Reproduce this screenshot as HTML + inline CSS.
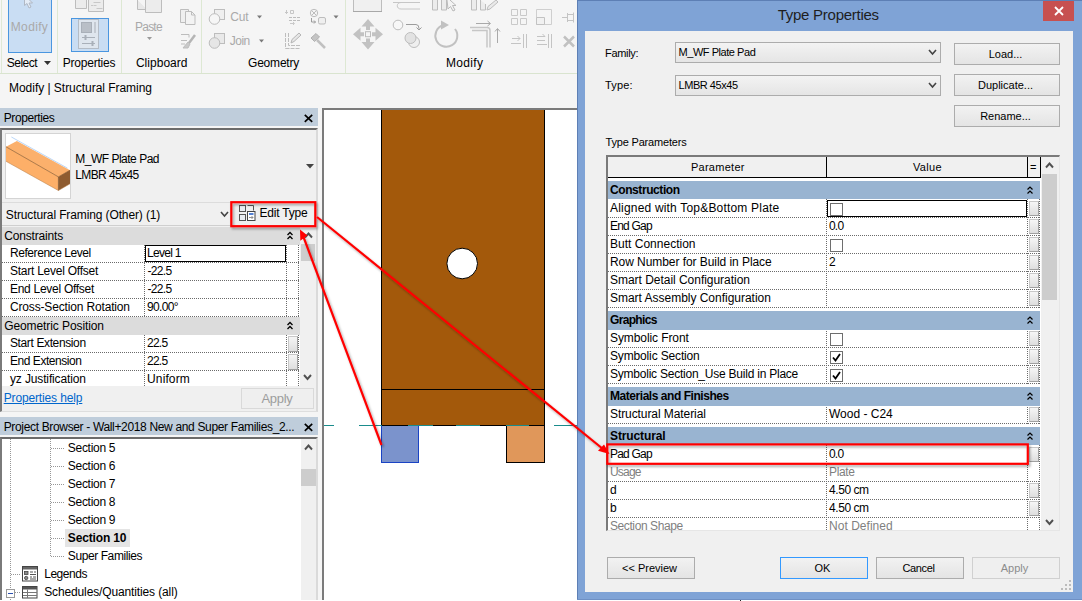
<!DOCTYPE html>
<html>
<head>
<meta charset="utf-8">
<title>Type Properties</title>
<style>
*{box-sizing:border-box;margin:0;padding:0}
html,body{width:1082px;height:601px;overflow:hidden;background:#f5f5f5}
body{position:relative;font-family:"Liberation Sans",sans-serif;font-size:12px;color:#000}
.a{position:absolute}
.t{position:absolute;white-space:nowrap;line-height:16px;height:16px}
.g{color:#a9a9a9}
/* ribbon */
#ribbon{left:0;top:0;width:577px;height:74px;background:#f5f5f5;border-bottom:1px solid #d9e4cf}
.vsep{position:absolute;top:0;width:1px;height:73px;background:#dde8d3}
/* properties */
.hdr{position:absolute;background:#bfcddb;height:18px}
.dot-h{position:absolute;height:1px;background-image:linear-gradient(to right,#6a6a6a 1px,transparent 1px);background-size:2px 1px}
.dot-v{position:absolute;width:1px;background-image:linear-gradient(to bottom,#6a6a6a 1px,transparent 1px);background-size:1px 2px}
.grp{position:absolute;background:#dcdcdc;height:18px}
.sbtn{position:absolute;width:10px;height:16px;background:linear-gradient(#f6f6f6,#dedede);border:1px solid #a0a0a0;border-top-color:#c8c8c8;border-left-color:#c8c8c8}
/* dialog */
#dlg{left:577px;top:0;width:505px;height:600px;background:#7fa3d6;border-left:1px solid #5d7fb5}
#cli{left:585px;top:31px;width:488px;height:561px;background:#f0f0f0}
.btn{position:absolute;height:22px;border:1px solid #acacac;background:linear-gradient(#f2f2f2,#e4e4e4);font-size:11px;text-align:center;line-height:20px;padding-right:3px}
.combo{position:absolute;height:21px;border:1px solid #acacac;background:linear-gradient(#f3f3f3,#e5e5e5);font-size:11px;line-height:19px;padding-left:2.500px;letter-spacing:-0.450px}
.bh{position:absolute;left:608px;width:432px;background:#99b4d1;height:18px}
.row{position:absolute;left:608px;width:432px;height:18px;background:#fff}
</style>
</head>
<body>
<!-- RIBBON -->
<div id="ribbon" class="a"></div>
<div class="vsep" style="left:1px;background:#dfe9d6"></div>
<div class="vsep" style="left:57px"></div>
<div class="vsep" style="left:121px"></div>
<div class="vsep" style="left:201px"></div>
<div class="vsep" style="left:345px"></div>
<div class="a" style="left:8px;top:-1px;width:44px;height:54px;background:#c9ddf3;border:1px solid #4a96e0"></div>
<div class="a" style="left:71px;top:18px;width:38px;height:34px;background:#c9ddf3;border:1px solid #4a96e0"></div>
<svg class="a" style="left:0;top:0" width="577" height="74" viewBox="0 0 577 74" fill="none" stroke="#bdbdbd" stroke-width="1">
 <!-- cursor arrow (Modify) -->
 <path d="M24.5 0 L24.5 5.5 L27 3.5 L29 8 L31 7 L29 3 L32.5 3 L29.5 0" stroke="#b0b8c4" fill="#e4ecf6"/>
 <!-- top props icon partial -->
 <path d="M75.5 0V8.5H86.5V0M88.5 0V11.5H103.5V0" fill="#ececec"/>
 <path d="M93.500 2.500h7M93.500 5.500h3M96.500 8.500h6M91 5.5h2" stroke="#c8c8c8"/>
 <!-- Properties icon sheet -->
 <rect x="78.500" y="19.500" width="20" height="29" fill="#dfe6ee" stroke="#b4bcc6"/>
 <rect x="81.500" y="22.500" width="10" height="10" fill="#b9bfc7" stroke="#a9b0b9"/>
 <rect x="94" y="22" width="2" height="11" fill="#c4cad2" stroke="none"/>
 <path d="M82 37.500h13M82 43.500h13" stroke="#a9b0b9"/>
 <path d="M85.500 35v5M92.500 41v5" stroke="#a9b0b9" stroke-width="2"/>
 <!-- Paste icon partial -->
 <path d="M137.500 0V9.500H147" fill="#e8e8e8"/>
 <path d="M145.500 0V12.500H161.500V0" fill="#ececec"/>
 <!-- paste arrow -->
 <path d="M147 37h5l-2.500 3z" fill="#9a9a9a" stroke="none"/>
 <!-- copy icon -->
 <path d="M180.500 9.500h8v13h-8z" fill="#efefef"/>
 <path d="M185.500 11.500h6l3.500 3.500v9.500h-9.500z" fill="#f3f3f3"/>
 <path d="M191.500 11.500v3.500h3.500"/>
 <!-- match brush icon -->
 <path d="M181 34.500h8v3M181 40.500h6M181 44h4" />
 <path d="M195 35l-6 8" stroke-width="2.500" stroke="#b5b5b5"/>
 <path d="M188 42l-5 6h5l2-4z" fill="#c9c9c9"/>
 <!-- cut icon -->
 <rect x="214.500" y="9.500" width="10" height="10" fill="#efefef"/>
 <circle cx="214.500" cy="19" r="5.300" fill="#f6f6f6"/>
 <path d="M257 15.500h5l-2.500 3z" fill="#7a7a7a" stroke="none"/>
 <!-- join icon -->
 <rect x="214.500" y="33.500" width="10" height="10" fill="#e9e9e9"/>
 <circle cx="214.500" cy="43" r="5.300" fill="#e6e6e6"/>
 <path d="M259 39.500h5l-2.500 3z" fill="#7a7a7a" stroke="none"/>
 <!-- cope/ wall joins icons -->
 <path d="M286.500 10v4M285 12.500h3M290.500 10.500h3v3h-3z" stroke="#c6c6c6"/>
 <path d="M289 17.500h12M289 20.500h12" stroke-dasharray="3 1"/>
 <path d="M290 23.500h4M293 22l1.500 1.500L293 25" stroke="#c9c9c9"/>
 <circle cx="314" cy="13" r="3.700"/>
 <path d="M311.500 10.500l5 5M316.500 10.500l-5 5"/>
 <rect x="318.500" y="17.500" width="7" height="6.500" rx="1.500" fill="#efefef"/>
 <path d="M311.500 18v4h4M314 20.500l1.500 1.500-1.500 1.500" stroke="#9c9c9c"/>
 <path d="M333.500 15.500h5l-2.500 3z" fill="#7a7a7a" stroke="none"/>
 <path d="M285.500 33v15.500M288.500 33v12.500h12M285.500 48.500h15" stroke-dasharray="4 1"/>
 <path d="M291 43l1-3.500 7-6.500 2 2-7 6.500z" fill="#e6e6e6" stroke="#b5b5b5"/>
 <path d="M311 38l5-4.500 3.500 3.500-5 4.500z" fill="#c4c4c4" stroke="#b0b0b0"/>
 <path d="M317 40l8 8" stroke-width="2.500" stroke="#c0c0c0"/>
 <!-- Modify panel top partial icons -->
 <rect x="353.500" y="-6" width="28" height="17.500" fill="#f0f0f0" stroke="#bdbdbd"/><path d="M353 11.500h29" stroke="#a8a8a8"/>
 <path d="M393 2.500h8c-5 0-5 6.500 0 6.500h19M401 2.500h19" stroke="#c6c6c6"/>
 <path d="M432.500 0v10h5V0M441.500 0v10h5V0" fill="#ececec"/>
 <path d="M447 0l1 9 2.500-2.500 2.500 4.500 2-1-2.500-4.500h3.500L450 0" fill="#f3f3f3" stroke="#b9b9b9"/>
 <path d="M471.500 0v10h5V0M480.500 0v10h5V4" fill="#ececec"/>
 <path d="M487 10l1-3.500 8-6.500 2 2-8 7z" fill="#e9e9e9"/>
 <!-- move icon -->
 <g stroke="none" fill="#c2c2c2">
  <path d="M368 19l6.500 7.500h-4.500v3.500h-4v-3.500h-4.500z"/>
  <path d="M368 49.500l6.500-7.500h-4.500v-3.500h-4v3.500h-4.500z"/>
  <path d="M353 34.200l7.500-6.500v4.500h3.500v4h-3.500v4.500z"/>
  <path d="M383 34.200l-7.500-6.500v4.500h-3.500v4h3.500v4.500z"/>
 </g>
 <rect x="365.500" y="31.700" width="5" height="5" fill="#f5f5f5" stroke="#bdbdbd"/>
 <!-- copy icon (circles) -->
 <circle cx="398" cy="25" r="4.800" fill="#f7f7f7"/>
 <circle cx="414" cy="42" r="5.500" fill="#efefef"/>
 <circle cx="410.500" cy="38" r="5.500" fill="#e2e2e2"/>
 <path d="M406 24.500h10q3 0 3 4v1M416.500 27.500l2.500 2.500 2.500-2.500" stroke="#9c9c9c"/>
 <!-- rotate icon -->
 <path d="M443 25.300A11 11 0 1 0 455 29" stroke-width="2" stroke="#c1c1c1"/>
 <path d="M441 20.500l8 4.500-8 4.500z" fill="#c1c1c1" stroke="none"/>
 <!-- trim icon -->
 <path d="M470 27.500h17q3 0 3 3v17M472 30.500h15v17" stroke="#c6c6c6" stroke-width="1.500"/>
 <path d="M476 23.500h14M487.500 21l3 2.500-3 2.500" stroke="#a9a9a9"/>
 <path d="M497.500 29v14M495 31.500l2.500-3 2.500 3" stroke="#a9a9a9"/>
 <!-- small icons -->
 <path d="M511.500 9.500h6v6h-6zM520.500 9.500h6v6h-6zM511.500 18.500h6v6h-6zM520.500 18.500h6v6h-6z" stroke="#c9c9c9"/>
 <path d="M536.500 9.500h15v15h-15z" stroke="#cfcfcf"/>
 <path d="M536.500 17.500h8v7h-8z" stroke="#c2c2c2" fill="#f1f1f1"/>
 <path d="M562 17.500h5M567.500 13v9M567.500 14.500h6v6h-6M573.500 12.500v10" stroke="#c4c4c4"/>
 <path d="M512 38.500h8M517.500 36l2.500 2.500-2.500 2.500M511 43.500h10M523.500 34v14M526.500 34v14" stroke="#c4c4c4"/>
 <path d="M537 36.500h8M537 40.500h8M542.500 34l2.500 2.500M537 44.500h10M548.500 34v14M551.500 34v14" stroke="#c4c4c4"/>
 <path d="M564 36.500l10 10M574 36.500l-10 10" stroke="#c1c1c1" stroke-width="2.500"/>
</svg>
<div class="t g" style="left:10.8px;top:19px;letter-spacing:0.33px">Modify</div>
<div class="t" style="left:6.8px;top:55px;letter-spacing:-0.53px">Select</div>
<svg class="a" style="left:44px;top:61px" width="8" height="5"><path d="M0 0h7l-3.500 4z" fill="#333"/></svg>
<div class="t" style="left:62.7px;top:55px;letter-spacing:-0.21px">Properties</div>
<div class="t g" style="left:135.1px;top:19px;letter-spacing:-0.80px">Paste</div>
<div class="t" style="left:135.9px;top:55px;letter-spacing:0.03px">Clipboard</div>
<div class="t g" style="left:230.3px;top:9px;letter-spacing:-0.24px">Cut</div>
<div class="t g" style="left:229.8px;top:33px;letter-spacing:-0.54px">Join</div>
<div class="t" style="left:248.0px;top:55px;letter-spacing:-0.20px">Geometry</div>
<div class="t" style="left:445.9px;top:55px;letter-spacing:0.35px">Modify</div>
<div class="t" style="left:9.0px;top:80px;letter-spacing:-0.03px">Modify | Structural Framing</div>
<!-- PROPERTIES PANEL -->
<div class="hdr" style="left:0;top:108px;width:318px"></div>
<div class="t" style="left:3.7px;top:110px;letter-spacing:-0.39px">Properties</div>
<svg class="a" style="left:304px;top:114px" width="9" height="9"><path d="M0.800 0.800l7.400 7M8.200 0.800l-7.400 7" stroke="#000" stroke-width="1.700"/></svg>
<div class="a" style="left:0;top:128px;width:318px;height:284px;background:#f0f0f0;border-top:2px solid #6b6b6b;border-left:2px solid #7a7a7a;border-right:2px solid #dadada;border-bottom:1px solid #dedede"></div>
<div class="a" style="left:5px;top:133px;width:66px;height:66px;background:#fff;border:1px solid #d4d4d4"></div>
<svg class="a" style="left:6px;top:134px" width="64" height="64" viewBox="0 0 64 64">
 <path d="M0 12.800L10.900 6.900L64 36.200L52.400 42.900z" fill="#fbb06c"/>
 <path d="M0 12.800L52.400 42.900L52.400 56.500L0 27.300z" fill="#fdaf68"/>
 <path d="M52.400 42.900L64 36.200L64 49.800L52.400 56.500z" fill="#8f5c30"/>
 <path d="M0 12.800L52.400 42.900" stroke="#8a5a2c" stroke-width="0.700" fill="none"/>
 <path d="M52.400 42.900L64 36.200M52.400 42.900v13.600" stroke="#7a4c22" stroke-width="0.600" fill="none"/>
 <path d="M0 27.300L52.400 56.500L64 49.800" stroke="#b5763c" stroke-width="0.500" fill="none"/>
 <path d="M5.400 3L61.500 34.200" stroke="#9cc4f4" stroke-width="0.700"/>
</svg>
<div class="t" style="left:75.2px;top:151px;letter-spacing:-0.49px">M_WF Plate Pad</div>
<div class="t" style="left:75.2px;top:167px;letter-spacing:-0.59px">LMBR 45x45</div>
<svg class="a" style="left:306px;top:164px" width="8" height="5"><path d="M0 0h8l-4 4.500z" fill="#444"/></svg>
<div class="a" style="left:2px;top:202px;width:314px;height:1px;background:#dcdcdc"></div>
<div class="a" style="left:2px;top:225px;width:314px;height:1px;background:#cfcfcf"></div>
<div class="t" style="left:5.8px;top:207px;letter-spacing:-0.12px">Structural Framing (Other) (1)</div>
<svg class="a" style="left:220px;top:211px" width="9" height="7"><path d="M1 1l3.500 4 3.500-4" stroke="#444" stroke-width="1.600" fill="none"/></svg>
<!-- edit type -->
<svg class="a" style="left:238px;top:204px" width="19" height="18" viewBox="0 0 19 18" fill="none">
 <rect x="1.500" y="1.500" width="6" height="6" fill="#e9edf2" stroke="#555"/>
 <rect x="1.500" y="10.500" width="6" height="6" fill="#e9edf2" stroke="#555"/>
 <path d="M9.500 1.500h6v5" stroke="#555"/>
 <rect x="9.500" y="7.500" width="7.500" height="9" fill="#fff" stroke="#444"/>
 <path d="M11 10h4.500" stroke="#2a62c8" stroke-width="1.600"/>
 <path d="M11 13.500h4M13.500 12l1.500 1.500-1.500 1.500" stroke="#777" stroke-width="0.800"/>
</svg>
<div class="t" style="left:259.6px;top:205px;letter-spacing:-0.23px">Edit Type</div>
<!-- table -->
<div class="a" style="left:2px;top:227px;width:298px;height:159px;background:#fff"></div>
<div class="grp" style="left:2px;top:227px;width:298px"></div>
<div class="grp" style="left:2px;top:317px;width:298px"></div>
<div class="t" style="left:4.2px;top:228px;letter-spacing:-0.17px">Constraints</div>
<div class="t" style="left:4.2px;top:318px;letter-spacing:-0.09px">Geometric Position</div>
<div class="t" style="left:10.0px;top:245px;letter-spacing:-0.44px">Reference Level</div>
<div class="t" style="left:10.0px;top:263px;letter-spacing:-0.25px">Start Level Offset</div>
<div class="t" style="left:10.0px;top:281px;letter-spacing:-0.28px">End Level Offset</div>
<div class="t" style="left:10.0px;top:299px;letter-spacing:-0.16px">Cross-Section Rotation</div>
<div class="t" style="left:10.0px;top:335px;letter-spacing:-0.38px">Start Extension</div>
<div class="t" style="left:10.0px;top:353px;letter-spacing:-0.46px">End Extension</div>
<div class="t" style="left:10.0px;top:371px;letter-spacing:-0.14px">yz Justification</div>
<div class="t" style="left:147.1px;top:245px;letter-spacing:-0.73px">Level 1</div>
<div class="t" style="left:147.5px;top:263px;letter-spacing:-0.69px">-22.5</div>
<div class="t" style="left:147.5px;top:281px;letter-spacing:-0.69px">-22.5</div>
<div class="t" style="left:147.1px;top:299px;letter-spacing:-0.69px">90.00&deg;</div>
<div class="t" style="left:147.1px;top:335px;letter-spacing:-0.80px">22.5</div>
<div class="t" style="left:147.1px;top:353px;letter-spacing:-0.80px">22.5</div>
<div class="t" style="left:147.1px;top:371px;letter-spacing:0.11px">Uniform</div>
<div class="dot-h" style="left:2px;top:262px;width:297px"></div>
<div class="dot-h" style="left:2px;top:280px;width:297px"></div>
<div class="dot-h" style="left:2px;top:298px;width:297px"></div>
<div class="dot-h" style="left:2px;top:316px;width:297px"></div>
<div class="dot-h" style="left:2px;top:352px;width:297px"></div>
<div class="dot-h" style="left:2px;top:370px;width:297px"></div>
<div class="dot-v" style="left:144px;top:245px;height:72px"></div>
<div class="dot-v" style="left:144px;top:335px;height:51px"></div>
<div class="dot-v" style="left:286px;top:245px;height:72px"></div>
<div class="dot-v" style="left:286px;top:335px;height:51px"></div>
<div class="dot-v" style="left:298px;top:245px;height:72px"></div>
<div class="dot-v" style="left:298px;top:335px;height:51px"></div>
<div class="a" style="left:145px;top:245px;width:141px;height:17px;border:1px solid #000;background:#fff"></div>
<div class="t" style="left:147.1px;top:245px;letter-spacing:-0.73px">Level 1</div>
<div class="sbtn" style="left:288px;top:336px"></div>
<div class="sbtn" style="left:288px;top:354px"></div>
<svg class="a" style="left:286px;top:230px" width="8" height="11"><path d="M1.500 5l2.500-2.500 2.500 2.500M1.500 9l2.500-2.500 2.500 2.500" stroke="#000" stroke-width="1.300" fill="none"/></svg>
<svg class="a" style="left:286px;top:320px" width="8" height="11"><path d="M1.500 5l2.500-2.500 2.500 2.500M1.500 9l2.500-2.500 2.500 2.500" stroke="#000" stroke-width="1.300" fill="none"/></svg>
<!-- scrollbar -->
<div class="a" style="left:300px;top:227px;width:15px;height:159px;background:#f0f0f0"></div>
<div class="a" style="left:301px;top:244px;width:14px;height:17px;background:#cdcdcd"></div>
<svg class="a" style="left:304px;top:232px" width="9" height="7"><path d="M1 5.500l3.500-4 3.500 4" stroke="#505050" stroke-width="1.900" fill="none"/></svg>
<svg class="a" style="left:303px;top:374px" width="9" height="7"><path d="M1 1l3.500 4 3.500-4" stroke="#505050" stroke-width="1.900" fill="none"/></svg>
<div class="t" style="left:3.7px;top:390px;color:#0066cc;text-decoration:underline;letter-spacing:-0.14px">Properties help</div>
<div class="a" style="left:241px;top:388px;width:73px;height:21px;border:1px solid #d9d9d9;background:#efefef"></div>
<div class="t" style="left:261.5px;top:391px;color:#9d9d9d;font-size:13px;letter-spacing:-0.31px">Apply</div>
<!-- CANVAS -->
<div class="a" style="left:322px;top:108px;width:256px;height:493px;background:#fff;border-left:2px solid #7b7b7b;border-top:2px solid #7b7b7b"></div>
<div class="a" style="left:319px;top:108px;width:3px;height:493px;background:#f5f5f5"></div>
<svg class="a" style="left:324px;top:110px" width="254" height="491" viewBox="324 110 254 491" shape-rendering="crispEdges">
 <rect x="381.500" y="108.500" width="163" height="317" fill="#a3590b" stroke="#000" stroke-width="1"/>
 <path d="M382 389.500H544" stroke="#000"/>
 <circle cx="462.200" cy="263.500" r="15.300" fill="#fff" stroke="#000" stroke-width="1" shape-rendering="auto"/>
 <rect x="382" y="426" width="36" height="36.500" fill="#7b93cc"/>
 <path d="M381.500 426V462.500H418.500V426" stroke="#1a43c4" fill="none"/>
 <rect x="507" y="426" width="37" height="36.500" fill="#e0975a"/>
 <path d="M506.500 426V462.500H544.500V426" stroke="#000" fill="none"/>
 <path d="M323 425.500H334M359 425.500H382M407.500 425.500H432.500M456 425.500H480M506 425.500H529M553.500 425.500H578" stroke="#1a8c8c"/>
</svg>
<!-- PROJECT BROWSER -->
<div class="hdr" style="left:0;top:417px;width:318px"></div>
<div class="t" style="left:3.7px;top:419px;letter-spacing:-0.34px">Project Browser - Wall+2018 New and Super Families_2...</div>
<svg class="a" style="left:304px;top:423px" width="9" height="9"><path d="M0.800 0.800l7.400 7M8.200 0.800l-7.400 7" stroke="#000" stroke-width="1.700"/></svg>
<div class="a" style="left:0;top:437px;width:318px;height:164px;background:#fff;border-top:2px solid #6b6b6b;border-left:2px solid #7a7a7a;border-right:2px solid #dadada"></div>
<div class="a" style="left:301px;top:439px;width:15px;height:162px;background:#f0f0f0"></div>
<div class="a" style="left:301px;top:469px;width:15px;height:17px;background:#cdcdcd"></div>
<svg class="a" style="left:304px;top:444px" width="9" height="7"><path d="M1 5.500l3.500-4 3.500 4" stroke="#505050" stroke-width="1.900" fill="none"/></svg>
<div class="dot-v" style="left:10px;top:439px;height:162px;opacity:.7"></div>
<div class="dot-v" style="left:50px;top:439px;height:118px;opacity:.7"></div>
<div class="dot-h" style="left:51px;top:448px;width:14px;opacity:.7"></div>
<div class="dot-h" style="left:51px;top:466px;width:14px;opacity:.7"></div>
<div class="dot-h" style="left:51px;top:484px;width:14px;opacity:.7"></div>
<div class="dot-h" style="left:51px;top:502px;width:14px;opacity:.7"></div>
<div class="dot-h" style="left:51px;top:520px;width:14px;opacity:.7"></div>
<div class="dot-h" style="left:51px;top:538px;width:14px;opacity:.7"></div>
<div class="dot-h" style="left:51px;top:556px;width:14px;opacity:.7"></div>
<div class="dot-h" style="left:11px;top:574px;width:10px;opacity:.7"></div>
<div class="dot-h" style="left:15px;top:592px;width:6px;opacity:.7"></div>
<div class="a" style="left:65px;top:529px;width:65px;height:18px;background:#e4e4e4"></div>
<div class="t" style="left:67.8px;top:440px;letter-spacing:-0.29px">Section 5</div>
<div class="t" style="left:67.8px;top:458px;letter-spacing:-0.29px">Section 6</div>
<div class="t" style="left:67.8px;top:476px;letter-spacing:-0.29px">Section 7</div>
<div class="t" style="left:67.8px;top:494px;letter-spacing:-0.29px">Section 8</div>
<div class="t" style="left:67.8px;top:512px;letter-spacing:-0.29px">Section 9</div>
<div class="t" style="left:67.8px;top:530px;font-weight:bold;letter-spacing:-0.15px">Section 10</div>
<div class="t" style="left:67.8px;top:548px;letter-spacing:-0.41px">Super Families</div>
<div class="t" style="left:44.2px;top:566px;letter-spacing:-0.46px">Legends</div>
<div class="t" style="left:44.2px;top:584px;letter-spacing:-0.13px">Schedules/Quantities (all)</div>
<svg class="a" style="left:22px;top:566px" width="17" height="16" viewBox="0 0 17 16" fill="none">
 <rect x="0.500" y="0.500" width="15" height="14.500" fill="#fff" stroke="#444"/>
 <rect x="1" y="1" width="14" height="2.500" fill="#666"/>
 <rect x="2.500" y="5.500" width="3.500" height="3" fill="#888" stroke="#444" stroke-width="0.800"/>
 <circle cx="4.200" cy="12" r="1.700" fill="#888" stroke="#444" stroke-width="0.800"/>
 <path d="M8 6h3M12 6h2M8 8.500h6M8 11h2M11 11h3M8 13h6" stroke="#555"/>
</svg>
<svg class="a" style="left:22px;top:586px" width="17" height="13" viewBox="0 0 17 13" fill="none">
 <rect x="0.500" y="0.500" width="14.500" height="11.500" fill="#fff" stroke="#444"/>
 <rect x="1" y="1" width="14" height="2.500" fill="#555"/>
 <path d="M1 6.500h14M1 9.500h14M5.500 3.500v8.500" stroke="#777"/>
</svg>
<div class="a" style="left:6px;top:589px;width:9px;height:9px;background:#fff;border:1px solid #9a9a9a"></div>
<div class="a" style="left:8px;top:593px;width:5px;height:1px;background:#2a4fb0"></div>
<!-- DIALOG -->
<div id="dlg" class="a"></div>
<div class="a" style="left:577px;top:0;width:505px;height:1px;background:#5d7fb5"></div>
<div class="a" style="left:0;top:600px;width:1082px;height:1px;background:#fff"></div>
<div class="a" style="left:577px;top:599px;width:505px;height:1px;background:#6f90c4"></div>
<div class="a" style="left:740px;top:600px;width:1px;height:1px;background:#222"></div>
<div class="t" style="left:777.7px;top:5px;font-size:15px;line-height:20px;height:20px;color:#1e1e1e;letter-spacing:-0.26px">Type Properties</div>
<div class="a" style="left:1043px;top:1px;width:31px;height:20px;background:#c75050"></div>
<svg class="a" style="left:1054px;top:6px" width="10" height="10"><path d="M1 1l8 8M9 1l-8 8" stroke="#fff" stroke-width="1.800"/></svg>
<div id="cli" class="a"></div>
<div class="t" style="left:605.1px;top:45px;font-size:11px;letter-spacing:-0.34px">Family:</div>
<div class="t" style="left:605.1px;top:77px;font-size:11px;letter-spacing:0.12px">Type:</div>
<div class="combo" style="left:675px;top:42px;width:266px">M_WF Plate Pad</div>
<div class="combo" style="left:675px;top:75px;width:266px">LMBR 45x45</div>
<svg class="a" style="left:928px;top:49px" width="9" height="7"><path d="M1 1l3.500 4 3.500-4" stroke="#444" stroke-width="1.600" fill="none"/></svg>
<svg class="a" style="left:928px;top:82px" width="9" height="7"><path d="M1 1l3.500 4 3.500-4" stroke="#444" stroke-width="1.600" fill="none"/></svg>
<div class="btn" style="left:954px;top:43px;width:106px">Load...</div>
<div class="btn" style="left:954px;top:74px;width:106px">Duplicate...</div>
<div class="btn" style="left:954px;top:105px;width:106px">Rename...</div>
<div class="t" style="left:605.5px;top:134px;font-size:11px;letter-spacing:-0.18px">Type Parameters</div>
<!-- table -->
<div class="a" style="left:606px;top:155px;width:454px;height:376px;background:#fff;border-left:2px solid #7a7a7a;border-top:2px solid #7a7a7a;border-right:1px solid #e6e6e6;border-bottom:1px solid #e6e6e6"></div>
<div class="a" style="left:608px;top:157px;width:433px;height:21px;background:#f0f0f0;border-bottom:1px solid #000"></div>
<div class="a" style="left:826px;top:157px;width:1px;height:20px;background:#000"></div>
<div class="a" style="left:1027px;top:157px;width:1px;height:20px;background:#000"></div>
<div class="a" style="left:1040px;top:157px;width:1px;height:20px;background:#000"></div>
<div class="t" style="left:690.9px;top:159px;font-size:11px;letter-spacing:0.28px">Parameter</div>
<div class="t" style="left:912.9px;top:159px;font-size:11px;letter-spacing:0.37px">Value</div>
<div class="t" style="left:1030px;top:159px;font-size:11px">=</div>
<div class="a" style="left:1041px;top:157px;width:18px;height:373px;background:#f0f0f0"></div>
<div class="a" style="left:1042px;top:174px;width:15px;height:126px;background:#cdcdcd"></div>
<svg class="a" style="left:1045px;top:162px" width="9" height="7"><path d="M1 5.500l3.500-4 3.500 4" stroke="#505050" stroke-width="1.900" fill="none"/></svg>
<svg class="a" style="left:1045px;top:519px" width="9" height="7"><path d="M1 1l3.500 4 3.500-4" stroke="#505050" stroke-width="1.900" fill="none"/></svg>
<div class="dot-v" style="left:826px;top:199px;height:109px"></div>
<div class="dot-v" style="left:826px;top:329px;height:55px"></div>
<div class="dot-v" style="left:826px;top:405px;height:19px"></div>
<div class="dot-v" style="left:826px;top:445px;height:85px"></div>
<div class="dot-v" style="left:1027px;top:199px;height:109px"></div>
<div class="dot-v" style="left:1027px;top:329px;height:55px"></div>
<div class="dot-v" style="left:1027px;top:405px;height:19px"></div>
<div class="dot-v" style="left:1027px;top:445px;height:85px"></div>
<div class="dot-v" style="left:1039px;top:199px;height:109px"></div>
<div class="dot-v" style="left:1039px;top:329px;height:55px"></div>
<div class="dot-v" style="left:1039px;top:405px;height:19px"></div>
<div class="dot-v" style="left:1039px;top:445px;height:85px"></div>
<div class="a" style="left:827px;top:200px;width:200px;height:17px;border:1px solid #000;background:#fff"></div>
<div class="bh" style="top:181px"></div><div class="t b" style="left:610.0px;top:182px;font-weight:bold;letter-spacing:-0.42px">Construction</div><svg class="a" style="left:1026px;top:185px" width="8" height="10"><path d="M1.500 4.500l2.500-2.500 2.500 2.500M1.500 8.500l2.500-2.500 2.500 2.500" stroke="#000" stroke-width="1.200" fill="none"/></svg>
<div class="t" style="left:610.0px;top:200px;letter-spacing:0.19px">Aligned with Top&amp;Bottom Plate</div><div class="a" style="left:830px;top:203px;width:13px;height:13px;background:#fff;border:1px solid #6e6e6e"></div><div class="sbtn" style="left:1029px;top:201px;height:15px"></div><div class="dot-h" style="left:608px;top:217px;width:432px"></div>
<div class="t" style="left:610.0px;top:218px;letter-spacing:-0.80px">End Gap</div><div class="t" style="left:829.0px;top:218px;letter-spacing:-0.80px">0.0</div><div class="sbtn" style="left:1029px;top:219px;height:15px"></div><div class="dot-h" style="left:608px;top:235px;width:432px"></div>
<div class="t" style="left:610.0px;top:236px;letter-spacing:0.01px">Butt Connection</div><div class="a" style="left:830px;top:239px;width:13px;height:13px;background:#fff;border:1px solid #6e6e6e"></div><div class="sbtn" style="left:1029px;top:237px;height:15px"></div><div class="dot-h" style="left:608px;top:253px;width:432px"></div>
<div class="t" style="left:610.0px;top:254px;letter-spacing:-0.06px">Row Number for Build in Place</div><div class="t" style="left:829.0px;top:254px;letter-spacing:-0.69px">2</div><div class="sbtn" style="left:1029px;top:255px;height:15px"></div><div class="dot-h" style="left:608px;top:271px;width:432px"></div>
<div class="t" style="left:610.0px;top:272px;letter-spacing:-0.03px">Smart Detail Configuration</div><div class="sbtn" style="left:1029px;top:273px;height:15px"></div><div class="dot-h" style="left:608px;top:289px;width:432px"></div>
<div class="t" style="left:610.0px;top:290px;letter-spacing:-0.02px">Smart Assembly Configuration</div><div class="sbtn" style="left:1029px;top:291px;height:15px"></div><div class="dot-h" style="left:608px;top:307px;width:432px"></div>
<div class="bh" style="top:311px;height:19px"></div><div class="t b" style="left:610.0px;top:312px;font-weight:bold;letter-spacing:-0.66px">Graphics</div><svg class="a" style="left:1026px;top:315px" width="8" height="10"><path d="M1.500 4.500l2.500-2.500 2.500 2.500M1.500 8.500l2.500-2.500 2.500 2.500" stroke="#000" stroke-width="1.200" fill="none"/></svg>
<div class="t" style="left:610.0px;top:330px;letter-spacing:-0.09px">Symbolic Front</div><div class="a" style="left:830px;top:333px;width:13px;height:13px;background:#fff;border:1px solid #6e6e6e"></div><div class="sbtn" style="left:1029px;top:331px;height:15px"></div><div class="dot-h" style="left:608px;top:347px;width:432px"></div>
<div class="t" style="left:610.0px;top:348px;letter-spacing:-0.15px">Symbolic Section</div><div class="a" style="left:830px;top:351px;width:13px;height:13px;background:#fff;border:1px solid #6e6e6e"></div><svg class="a" style="left:832px;top:353px" width="9" height="9"><path d="M1 4.500l2.500 3 4.500-6.500" stroke="#000" stroke-width="1.800" fill="none"/></svg><div class="sbtn" style="left:1029px;top:349px;height:15px"></div><div class="dot-h" style="left:608px;top:365px;width:432px"></div>
<div class="t" style="left:610.0px;top:366px;letter-spacing:-0.23px">Symbolic Section_Use Build in Place</div><div class="a" style="left:830px;top:369px;width:13px;height:13px;background:#fff;border:1px solid #6e6e6e"></div><svg class="a" style="left:832px;top:371px" width="9" height="9"><path d="M1 4.500l2.500 3 4.500-6.500" stroke="#000" stroke-width="1.800" fill="none"/></svg><div class="sbtn" style="left:1029px;top:367px;height:15px"></div><div class="dot-h" style="left:608px;top:383px;width:432px"></div>
<div class="bh" style="top:387px;height:19px"></div><div class="t b" style="left:610.0px;top:388px;font-weight:bold;letter-spacing:-0.45px">Materials and Finishes</div><svg class="a" style="left:1026px;top:391px" width="8" height="10"><path d="M1.500 4.500l2.500-2.500 2.500 2.500M1.500 8.500l2.500-2.500 2.500 2.500" stroke="#000" stroke-width="1.200" fill="none"/></svg>
<div class="t" style="left:610.0px;top:406px;letter-spacing:-0.08px">Structural Material</div><div class="t" style="left:829.0px;top:406px;letter-spacing:-0.01px">Wood - C24</div><div class="sbtn" style="left:1029px;top:407px;height:15px"></div><div class="dot-h" style="left:608px;top:423px;width:432px"></div>
<div class="bh" style="top:427px"></div><div class="t b" style="left:610.0px;top:428px;font-weight:bold;letter-spacing:-0.12px">Structural</div><svg class="a" style="left:1026px;top:431px" width="8" height="10"><path d="M1.500 4.500l2.500-2.500 2.500 2.500M1.500 8.500l2.500-2.500 2.500 2.500" stroke="#000" stroke-width="1.200" fill="none"/></svg>
<div class="t" style="left:610.0px;top:446px;letter-spacing:-0.80px">Pad Gap</div><div class="t" style="left:829.0px;top:446px;letter-spacing:-0.80px">0.0</div><div class="sbtn" style="left:1029px;top:447px;height:15px"></div>
<div class="t" style="left:610.0px;top:464px;color:#7f7f7f;letter-spacing:-0.80px">Usage</div><div class="t" style="left:829.0px;top:464px;color:#7f7f7f;letter-spacing:-0.36px">Plate</div><div class="dot-h" style="left:608px;top:481px;width:432px"></div>
<div class="t" style="left:610.0px;top:482px;letter-spacing:-0.69px">d</div><div class="t" style="left:829.0px;top:482px;letter-spacing:-0.43px">4.50 cm</div><div class="sbtn" style="left:1029px;top:483px;height:15px"></div><div class="dot-h" style="left:608px;top:499px;width:432px"></div>
<div class="t" style="left:610.0px;top:500px;letter-spacing:-0.69px">b</div><div class="t" style="left:829.0px;top:500px;letter-spacing:-0.43px">4.50 cm</div><div class="sbtn" style="left:1029px;top:501px;height:15px"></div><div class="dot-h" style="left:608px;top:517px;width:432px"></div>
<div class="t" style="left:610.0px;top:518px;color:#7f7f7f;letter-spacing:-0.41px">Section Shape</div><div class="t" style="left:829.0px;top:518px;color:#7f7f7f;letter-spacing:0.03px">Not Defined</div>

<!-- bottom buttons -->
<div class="btn" style="left:607px;top:557px;width:88px">&lt;&lt; Preview</div>
<div class="btn" style="left:780px;top:557px;width:88px;border-color:#3399ff">OK</div>
<div class="btn" style="left:876px;top:557px;width:88px;letter-spacing:-0.400px">Cancel</div>
<div class="btn" style="left:972px;top:557px;width:88px;color:#8c8c8c;border-color:#d0d0d0;background:#efefef">Apply</div>
<svg class="a" style="left:1061px;top:580px" width="11" height="11" fill="#bcbcbc"><rect x="8" y="0" width="2" height="2"/><rect x="4" y="4" width="2" height="2"/><rect x="8" y="4" width="2" height="2"/><rect x="0" y="8" width="2" height="2"/><rect x="4" y="8" width="2" height="2"/><rect x="8" y="8" width="2" height="2"/></svg>
<!-- ANNOTATIONS -->
<svg class="a" style="left:0;top:0;overflow:visible" width="1082" height="601" viewBox="0 0 1082 601" fill="none">
 <defs><filter id="sh" x="-5%" y="-5%" width="112%" height="115%"><feDropShadow dx="1.500" dy="2" stdDeviation="1.300" flood-color="#000" flood-opacity="0.330"/></filter></defs>
 <g filter="url(#sh)" stroke="#ff0000" stroke-width="2.200">
  <rect x="231.300" y="202.200" width="84" height="24"/>
  <rect x="607.300" y="444.400" width="420.500" height="19.400"/>
  <path d="M317 217L603 449"/>
  <path d="M381.500 445L303.500 237"/>
 </g>
 <path d="M609.500 454L598 450.800L604 444.500z" fill="#ff0000"/>
 <path d="M300 229.500L307.500 235.500L300.300 240.800z" fill="#ff0000"/>
</svg>
</body>
</html>
